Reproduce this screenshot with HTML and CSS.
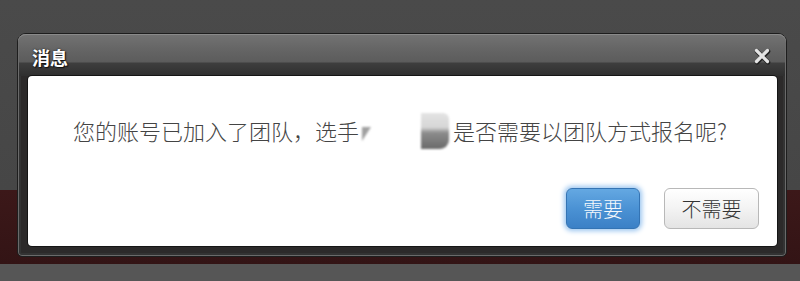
FILE: index.html
```html
<!DOCTYPE html>
<html lang="zh-CN">
  <head>
    <meta charset="utf-8">
    <title>消息</title>
    <link rel="stylesheet" href="styles.css">
  </head>
  <body>
    <div class="dialog">
      <div class="title-bar">
        <span class="title">消息</span>
        <svg class="close" width="18" height="18" viewBox="0 0 18 18">
          <path d="M3.5 3.5 L14.5 14.5 M14.5 3.5 L3.5 14.5" stroke="#222" stroke-width="4.5" stroke-linecap="round" transform="translate(0.6 0.8)"/>
          <path d="M3.5 3.5 L14.5 14.5 M14.5 3.5 L3.5 14.5" stroke="#e4e4e4" stroke-width="3.2" stroke-linecap="round"/>
        </svg>
      </div>
      <div class="content">
        <p class="message">您的账号已加入了团队，选手<span class="hidden-name"><span class="blot-a"></span><span class="blot-b"></span></span>是否需要以团队方式报名呢?</p>
        <div class="buttons">
          <button class="btn btn-primary">需要</button>
          <button class="btn btn-default">不需要</button>
        </div>
      </div>
    </div>
  </body>
</html>
```

FILE: styles.css
```css
body {
  margin: 0;
  height: 281px;
  overflow: hidden;
  font-family: "Noto Sans CJK SC", "Noto Sans", sans-serif;
  background: linear-gradient(to bottom, #4a4a4a 0, #464646 190px, #3c1819 190px, #331415 264px, #565656 264px);
  padding-top: 33px;
  box-sizing: border-box;
}

.dialog {
  width: 770px;
  height: 224px;
  margin-left: 17px;
  box-sizing: border-box;
  background: #2c2a2a;
  border: 1px solid #1e1e1e;
  border-radius: 9px 9px 5px 5px;
  box-shadow: inset 0 0 0 1px #6a6a6a, inset 0 0 0 3px #333;
  padding: 0 9px 10px 10px;
  display: flex;
  flex-direction: column;
}

.title-bar {
  height: 42px;
  margin: 0 -9px 0 -10px;
  padding: 4px 15px 0 14px;
  box-sizing: border-box;
  border-radius: 8px 8px 0 0;
  background: linear-gradient(to bottom, #737373 0, #666 14px, #5c5c5c 28px, #3e3e3e 29px, #2f2f2f 42px);
  box-shadow: inset 0 1px 0 #8a8a8a, inset 1px 0 0 #6c6c6c, inset -1px 0 0 #6c6c6c;
  display: flex;
  align-items: center;
  justify-content: space-between;
}

.title {
  color: #fff;
  font-size: 18px;
  font-weight: bold;
  text-shadow: 1px 1px 1px #111, 0 0 2px #222;
}

.close {
  margin-top: -2px;
}

.content {
  flex: 1;
  background: #fff;
  border-radius: 4px;
  box-shadow: 0 0 0 1px #151515;
  padding: 39px 18px 0 45px;
  display: flex;
  flex-direction: column;
}

.message {
  margin: 0;
  font-size: 22px;
  font-weight: 300;
  line-height: 30px;
  color: #444;
  white-space: nowrap;
}

.hidden-name {
  display: inline-block;
  width: 94px;
  height: 30px;
  vertical-align: top;
  position: relative;
}

.blot-a {
  position: absolute;
  left: 3px;
  top: 12px;
  width: 0;
  height: 0;
  border-left: 9px solid #a0a0a0;
  border-bottom: 14px solid transparent;
  filter: blur(1px);
}

.blot-b {
  position: absolute;
  left: 62px;
  top: -2px;
  width: 28px;
  height: 36px;
  border-radius: 0 6px 9px 0;
  background: linear-gradient(to bottom, #e4e4e4 0, #d6d6d6 40%, #8c8c8c 55%, #6a6a6a 100%);
  filter: blur(1px);
}

.buttons {
  margin-top: 43px;
  display: flex;
  justify-content: flex-end;
  gap: 24px;
}

.btn {
  height: 41px;
  border-radius: 6px;
  font-family: "Noto Sans CJK SC", "Noto Sans", sans-serif;
  font-size: 20px;
  font-weight: 300;
  padding: 0;
  cursor: pointer;
}

.btn-primary {
  width: 74px;
  color: #f4f8fc;
  background: linear-gradient(to bottom, #64a8e2 0, #4b92d4 50%, #3b80c6 100%);
  border: 1px solid #3474b4;
  box-shadow: 0 0 5px 2px #9cc6f0;
}

.btn-default {
  width: 95px;
  color: #333;
  background: linear-gradient(to bottom, #ffffff 0, #f3f3f3 50%, #e4e4e4 100%);
  border: 1px solid #b8b8b8;
  box-shadow: inset 0 1px 0 #fff;
}
```
